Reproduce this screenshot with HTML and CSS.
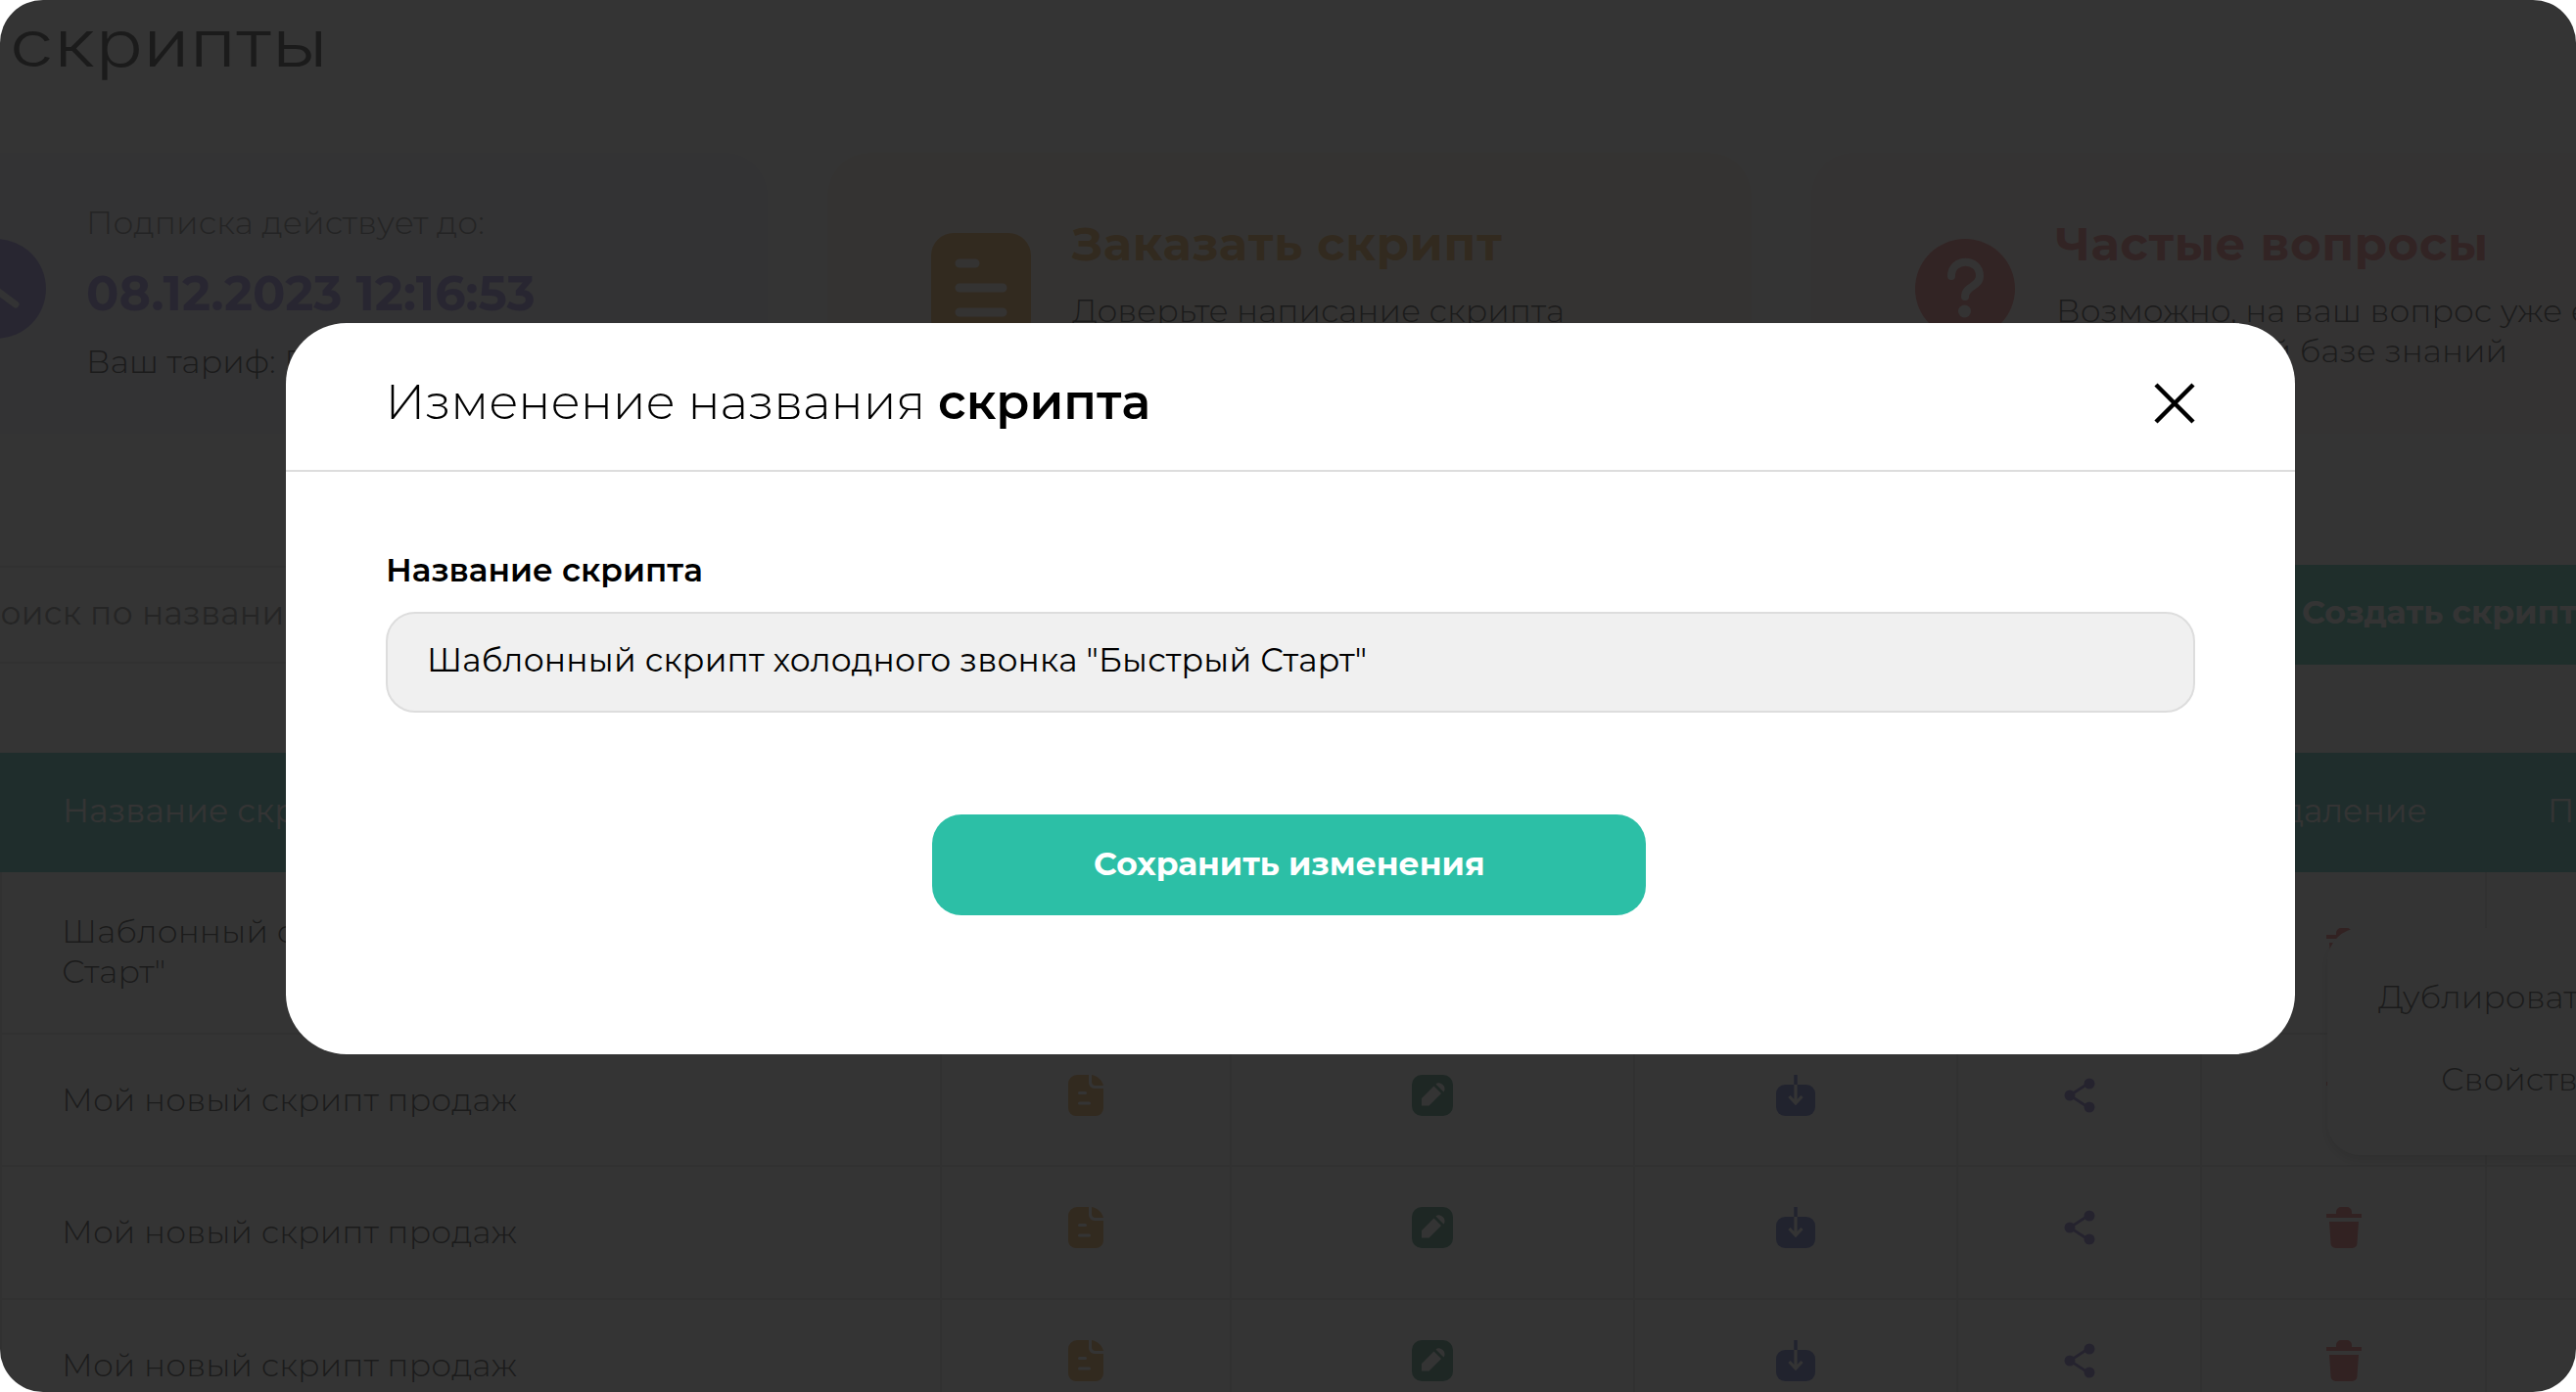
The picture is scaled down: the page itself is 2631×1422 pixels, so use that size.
FILE: index.html
```html
<!DOCTYPE html>
<html lang="ru">
<head>
    <meta charset="UTF-8">
    <meta name="viewport" content="width=device-width, initial-scale=1.0">
    <title>Скрипты</title>
    <link rel="stylesheet" href="styles.css">
</head>
<body>
    <svg class="sprite" xmlns="http://www.w3.org/2000/svg">
        <symbol id="icon-file" viewBox="0 0 36 42">
            <path d="M9 0h12v8a6 6 0 0 0 6 6h9v20a8 8 0 0 1-8 8H8a8 8 0 0 1-8-8V9a9 9 0 0 1 9-9zM24 0c6 1 11 6 12 11h-8a4 4 0 0 1-4-4z" fill="#e6942c"/>
            <path d="M11.500 18.500h6M11.500 29h10" stroke="#fff" stroke-width="3" stroke-linecap="round"/>
        </symbol>
        <symbol id="icon-edit" viewBox="0 0 42 42">
            <rect width="42" height="42" rx="10" fill="#1f7a5a"/>
            <path d="M10 24 22.500 11.500l7.500 7.500-12.500 12.500H10zM24.500 9.500c4-4 12 3 8 8z" fill="#fff"/>
        </symbol>
        <symbol id="icon-download" viewBox="0 0 42 42">
            <path d="M10 10h22a9 9 0 0 1 9 9v14a9 9 0 0 1-9 9H10a9 9 0 0 1-9-9V19a9 9 0 0 1 9-9z" fill="#3f52c4"/>
            <path d="M21 0v10" stroke="#3f52c4" stroke-width="3.500"/>
            <path d="M21 10v18M14.500 22l6.500 7 6.500-7" stroke="#fff" stroke-width="3.200" fill="none"/>
        </symbol>
        <symbol id="icon-share" viewBox="0 0 42 42">
            <path d="M31 8 11 21l20 13" stroke="#6a52c4" stroke-width="2.800" fill="none"/>
            <circle cx="31" cy="9" r="5.500" fill="#6a52c4"/>
            <circle cx="11" cy="21" r="5.500" fill="#6a52c4"/>
            <circle cx="31" cy="33" r="5.500" fill="#6a52c4"/>
        </symbol>
        <symbol id="icon-trash" viewBox="0 0 36 42">
            <path d="M0 7h10V5a5 5 0 0 1 5-5h6a5 5 0 0 1 5 5v2h10v4H0zM3 15h30l-1.500 22a5 5 0 0 1-5 5h-17a5 5 0 0 1-5-5z" fill="#ea4848"/>
        </symbol>
    </svg>

    <div class="screen">
        <h1 class="page-title">скрипты</h1>

        <div class="cards">
            <div class="card card-time">
                <svg class="card-icon" viewBox="0 0 102 102">
                    <circle cx="51" cy="51" r="51" fill="#8674dc"/>
                    <path d="M51 22v30l20 15" stroke="#efeefb" stroke-width="7" stroke-linecap="round" fill="none"/>
                </svg>
                <div class="card-text">
                    <p class="card-note">Подписка действует до:</p>
                    <p class="card-date">08.12.2023 12:16:53</p>
                    <p class="card-plan">Ваш тариф: Базовый</p>
                </div>
            </div>
            <div class="card card-order">
                <svg class="card-icon" viewBox="0 0 102 112">
                    <rect width="102" height="112" rx="23" fill="#e6942c"/>
                    <path d="M29 31h16M29 56h44M29 81h44" stroke="#fdf4e8" stroke-width="9" stroke-linecap="round"/>
                </svg>
                <div class="card-text">
                    <h2 class="card-title">Заказать скрипт</h2>
                    <p class="card-descr">Доверьте написание скрипта<br>профессионалам</p>
                </div>
            </div>
            <div class="card card-faq">
                <svg class="card-icon" viewBox="0 0 102 102">
                    <circle cx="51" cy="51" r="51" fill="#e85a5a"/>
                    <path d="M37 38c0-19 29-19 29 0 0 11-15 10-15 21" stroke="#fdeeee" stroke-width="8" stroke-linecap="round" fill="none"/>
                    <circle cx="50.500" cy="74" r="6.500" fill="#fdeeee"/>
                </svg>
                <div class="card-text">
                    <h2 class="card-title">Частые вопросы</h2>
                    <p class="card-descr">Возможно, на ваш вопрос уже есть<br>ответ в нашей базе знаний</p>
                </div>
            </div>
        </div>

        <div class="toolbar">
            <div class="search">Поиск по названию</div>
            <div class="create-btn">Создать скрипт</div>
        </div>

        <div class="table">
            <div class="row head">
                <div class="cell name">Название скрипта</div>
                <div class="cell"></div>
                <div class="cell"></div>
                <div class="cell"></div>
                <div class="cell"></div>
                <div class="cell">Удаление</div>
                <div class="cell last">Прочее</div>
            </div>
            <div class="row tall">
                <div class="cell name"><span class="name-first">Шаблонный скрипт холодного звонка "Быстрый Старт"</span></div>
                <div class="cell"><svg class="icon narrow"><use href="#icon-file"/></svg></div>
                <div class="cell"><svg class="icon"><use href="#icon-edit"/></svg></div>
                <div class="cell"><svg class="icon"><use href="#icon-download"/></svg></div>
                <div class="cell"><svg class="icon"><use href="#icon-share"/></svg></div>
                <div class="cell"><svg class="icon narrow"><use href="#icon-trash"/></svg></div>
                <div class="cell"></div>
            </div>
            <div class="row">
                <div class="cell name">Мой новый скрипт продаж</div>
                <div class="cell"><svg class="icon narrow"><use href="#icon-file"/></svg></div>
                <div class="cell"><svg class="icon"><use href="#icon-edit"/></svg></div>
                <div class="cell"><svg class="icon"><use href="#icon-download"/></svg></div>
                <div class="cell"><svg class="icon"><use href="#icon-share"/></svg></div>
                <div class="cell"><svg class="icon narrow"><use href="#icon-trash"/></svg></div>
                <div class="cell"></div>
            </div>
            <div class="row">
                <div class="cell name">Мой новый скрипт продаж</div>
                <div class="cell"><svg class="icon narrow"><use href="#icon-file"/></svg></div>
                <div class="cell"><svg class="icon"><use href="#icon-edit"/></svg></div>
                <div class="cell"><svg class="icon"><use href="#icon-download"/></svg></div>
                <div class="cell"><svg class="icon"><use href="#icon-share"/></svg></div>
                <div class="cell"><svg class="icon narrow"><use href="#icon-trash"/></svg></div>
                <div class="cell"></div>
            </div>
            <div class="row">
                <div class="cell name">Мой новый скрипт продаж</div>
                <div class="cell"><svg class="icon narrow"><use href="#icon-file"/></svg></div>
                <div class="cell"><svg class="icon"><use href="#icon-edit"/></svg></div>
                <div class="cell"><svg class="icon"><use href="#icon-download"/></svg></div>
                <div class="cell"><svg class="icon"><use href="#icon-share"/></svg></div>
                <div class="cell"><svg class="icon narrow"><use href="#icon-trash"/></svg></div>
                <div class="cell"></div>
            </div>
        </div>

        <!-- Меню строки -->
        <div class="row-menu">
            <span class="menu-item">Дублировать</span>
            <span class="menu-item">Свойства</span>
        </div>

        <!-- Модальное окно -->
        <div class="overlay">
            <div class="modal">
                <div class="modal-header">
                    <h2 class="modal-title">Изменение названия <b>скрипта</b></h2>
                    <svg class="modal-close" viewBox="0 0 42 42">
                        <path d="M2 2 40 40M40 2 2 40" stroke="#000" stroke-width="4.500"/>
                    </svg>
                </div>
                <div class="modal-body">
                    <label class="field-label">Название скрипта</label>
                    <div class="field">Шаблонный скрипт холодного звонка "Быстрый Старт"</div>
                    <button class="save-btn">Сохранить изменения</button>
                </div>
            </div>
        </div>
    </div>
</body>
</html>
```
FILE: styles.css
```css
* {
    margin: 0;
    padding: 0;
    box-sizing: border-box;
}

body {
    background: #ffffff;
    font-family: 'Montserrat', 'Open Sans', sans-serif;
    font-size: 33px;
    color: #000000;
    overflow: hidden;
}

.sprite {
    display: none;
}

.screen {
    position: relative;
    width: 2631px;
    height: 1422px;
    border-radius: 44px;
    overflow: hidden;
    background: #ffffff;
    white-space: nowrap;
}

.page-title {
    height: 156px;
    padding: 2px 0 0 8px;
    font-family: 'Inter', sans-serif;
    font-size: 66px;
    font-weight: 300;
    line-height: 84px;
    transform: scaleX(1.23);
    transform-origin: left;
}

/* Карточки */
.cards {
    display: grid;
    grid-template-columns: 944px 944px 944px;
    gap: 61px;
    margin-left: -160px;
    height: 287px;
}

.card {
    display: flex;
    border-radius: 44px;
}

.card-time {
    background: #efeefb;
    padding: 88px 0 0 105px;
}

.card-order {
    background: #fdf4e8;
    padding: 82px 0 0 106px;
}

.card-faq {
    background: #fdeeee;
    padding: 88px 0 0 106px;
}

.card-icon {
    flex: none;
    width: 102px;
    height: 102px;
}

.card-order .card-icon {
    height: 112px;
}

.card-text {
    margin-left: 42px;
}

.card-time .card-text {
    margin-top: -44px;
    margin-left: 41px;
}

.card-order .card-text {
    margin-top: -19px;
}

.card-faq .card-text {
    margin-top: -25px;
}

.card-note {
    color: #5b5b5b;
    line-height: 54px;
    font-weight: 300;
    letter-spacing: 0.15px;
}

.card-date {
    font-size: 49.3px;
    font-weight: 700;
    line-height: 91px;
    color: #8674dc;
}

.card-plan {
    line-height: 48px;
    font-weight: 300;
}

.card-title {
    font-size: 48px;
    line-height: 60px;
    letter-spacing: 0.7px;
}

.card-order .card-title {
    color: #e6942c;
}

.card-faq .card-title {
    color: #e85a5a;
}

.card-descr {
    margin-top: 18px;
    line-height: 41px;
    font-weight: 300;
}

/* Поиск */
.toolbar {
    display: flex;
    justify-content: space-between;
    align-items: center;
    margin-top: 134px;
    height: 102px;
}

.search {
    width: 2200px;
    height: 100px;
    margin-left: -60px;
    padding-left: 31px;
    border: 2px solid #e2e2e2;
    line-height: 93px;
    letter-spacing: 0.3px;
    color: #666666;
}

.create-btn {
    width: 431px;
    height: 102px;
    padding-left: 151px;
    background: #2cbfa6;
    color: #ffffff;
    font-weight: 700;
    line-height: 97px;
}

/* Таблица */
.table {
    margin-top: 90px;
}

.row {
    display: grid;
    grid-template-columns: 962px 296px 412px 330px 249px 291px 300px;
    height: 135.3px;
    border-bottom: 2px solid #dddddd;
}

.head {
    height: 122px;
    background: #2cb5aa;
    color: #ffffff;
    border-bottom: none;
}

.tall {
    height: 166px;
}

.cell {
    display: flex;
    justify-content: center;
    padding-top: 41px;
    border-right: 2px solid #dddddd;
}

.tall .cell {
    padding-top: 57px;
}

.cell.name {
    justify-content: flex-start;
    padding-left: 61px;
    padding-top: 46px;
    font-weight: 300;
    letter-spacing: 0.1px;
    border-left: 2px solid #dddddd;
}

.tall .cell.name {
    padding-top: 40px;
}

.head .cell,
.head .cell.name {
    padding-top: 39px;
    border: none;
}

.head .cell.name {
    padding-left: 64px;
    font-weight: 400;
}

.head .cell.last {
    justify-content: flex-start;
    padding-left: 62px;
}

.name-first {
    white-space: normal;
    width: 870px;
    line-height: 41px;
}

.icon {
    width: 42px;
    height: 42px;
}

.icon.narrow {
    width: 36px;
}

.row-menu {
    position: absolute;
    left: 2377px;
    top: 948px;
    width: 330px;
    height: 232px;
    display: flex;
    flex-direction: column;
    padding-top: 28px;
    border-radius: 34px;
    background: #ffffff;
    box-shadow: 0 6px 12px rgba(0, 0, 0, 0.2);
    font-weight: 300;
}

.menu-item {
    padding-left: 52px;
    line-height: 84px;
}

.menu-item + .menu-item {
    padding-left: 116px;
}

/* Модалка */
.overlay {
    position: absolute;
    inset: 0;
    display: flex;
    align-items: flex-start;
    padding: 330px 0 0 291.5px;
    background: rgba(30, 30, 30, 0.9);
}

.modal {
    width: 2052.5px;
    height: 746.5px;
    border-radius: 62px;
    background: #ffffff;
}

.modal-header {
    display: flex;
    justify-content: space-between;
    height: 152px;
    padding: 61px 102px 0 102px;
    border-bottom: 2px solid #dddddd;
}

.modal-title {
    margin-top: -13px;
    font-size: 49.5px;
    font-weight: 300;
    line-height: 64px;
}

.modal-title b {
    font-weight: 600;
}

.modal-close {
    width: 42px;
    height: 42px;
}

.modal-body {
    display: flex;
    flex-direction: column;
    padding: 78px 102.5px 0;
}

.field-label {
    margin-bottom: 20px;
    font-size: 32.8px;
    font-weight: 600;
    line-height: 45px;
}

.field {
    height: 102.5px;
    padding-left: 40px;
    border: 2px solid #dddddd;
    border-radius: 30px;
    background: #f0f0f0;
    line-height: 95px;
    letter-spacing: 0.2px;
}

.save-btn {
    align-self: center;
    width: 729px;
    height: 103px;
    margin-top: 104.5px;
    margin-right: 2px;
    padding-bottom: 4px;
    border: none;
    border-radius: 30px;
    background: #2cbfa6;
    color: #ffffff;
    font-family: inherit;
    font-size: 32.9px;
    font-weight: 700;
}
```
